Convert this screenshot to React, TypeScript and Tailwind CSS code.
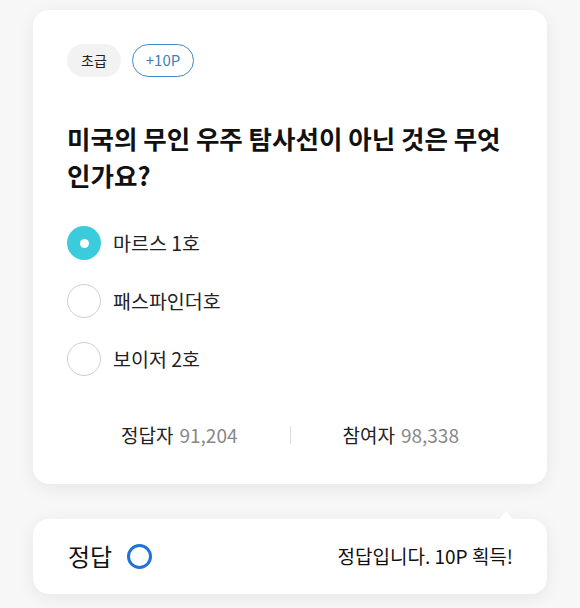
import React from "react";

const font = { fontFamily: '"Noto Sans CJK KR", "Noto Sans", sans-serif' };

function Radio({ checked }: { checked?: boolean }) {
  return checked ? (
    <span className="flex h-[34px] w-[34px] shrink-0 items-center justify-center rounded-full bg-[#3ccbdd]">
      <span className="h-[9px] w-[9px] rounded-full bg-white" />
    </span>
  ) : (
    <span className="h-[34px] w-[34px] shrink-0 rounded-full border-[1.5px] border-[#cfcfcf] bg-white" />
  );
}

export default function App() {
  const options = [
    { label: "마르스 1호", checked: true },
    { label: "패스파인더호" },
    { label: "보이저 2호" },
  ];
  return (
    <div className="min-h-[608px] w-[580px] bg-[#f7f7f7] px-[33px] pt-[10px]" style={font}>
      <div className="rounded-[16px] bg-white px-[34px] pb-[34px] pt-[34px] shadow-[0_4px_18px_rgba(0,0,0,0.07)]">
        <div className="flex items-center gap-[11px]">
          <span className="flex h-[33px] items-center rounded-full bg-[#f2f2f2] px-[14px] text-[14px] text-[#222]">초급</span>
          <span className="flex h-[33px] items-center rounded-full border-[1.5px] border-[#3f86c8] px-[13px] text-[15px] text-[#3f7fbf]">+10P</span>
        </div>
        <h1 className="mt-[42px] text-[25.5px] font-bold leading-[37px] text-[#111]">
          미국의 무인 우주 탐사선이 아닌 것은 무엇<br />인가요?
        </h1>
        <div className="mt-[33px] flex flex-col gap-[24px]">
          {options.map((o) => (
            <div key={o.label} className="flex items-center gap-[12px]">
              <Radio checked={o.checked} />
              <span className="text-[19.5px] text-[#222]">{o.label}</span>
            </div>
          ))}
        </div>
        <div className="mt-[45px] flex items-center justify-center gap-[52px] text-[19px]">
          <div className="flex gap-[6px]">
            <span className="text-[#222]">정답자</span>
            <span className="text-[#888]">91,204</span>
          </div>
          <span className="h-[18px] w-px bg-[#ddd]" />
          <div className="flex gap-[6px]">
            <span className="text-[#222]">참여자</span>
            <span className="text-[#888]">98,338</span>
          </div>
        </div>
      </div>
      <div className="relative mt-[35px] flex h-[75px] items-center justify-between rounded-[16px] bg-white pl-[35px] pr-[34px] shadow-[0_4px_18px_rgba(0,0,0,0.07)]">
        <span className="absolute right-[34px] top-[-8px] h-0 w-0 border-x-[7px] border-b-[8px] border-x-transparent border-b-white" />
        <div className="flex items-center gap-[15px]">
          <span className="text-[24px] text-[#111]">정답</span>
          <span className="h-[25px] w-[25px] rounded-full border-[3.5px] border-[#1f72d8]" />
        </div>
        <span className="text-[19px] text-[#111]">정답입니다. 10P 획득!</span>
      </div>
    </div>
  );
}
